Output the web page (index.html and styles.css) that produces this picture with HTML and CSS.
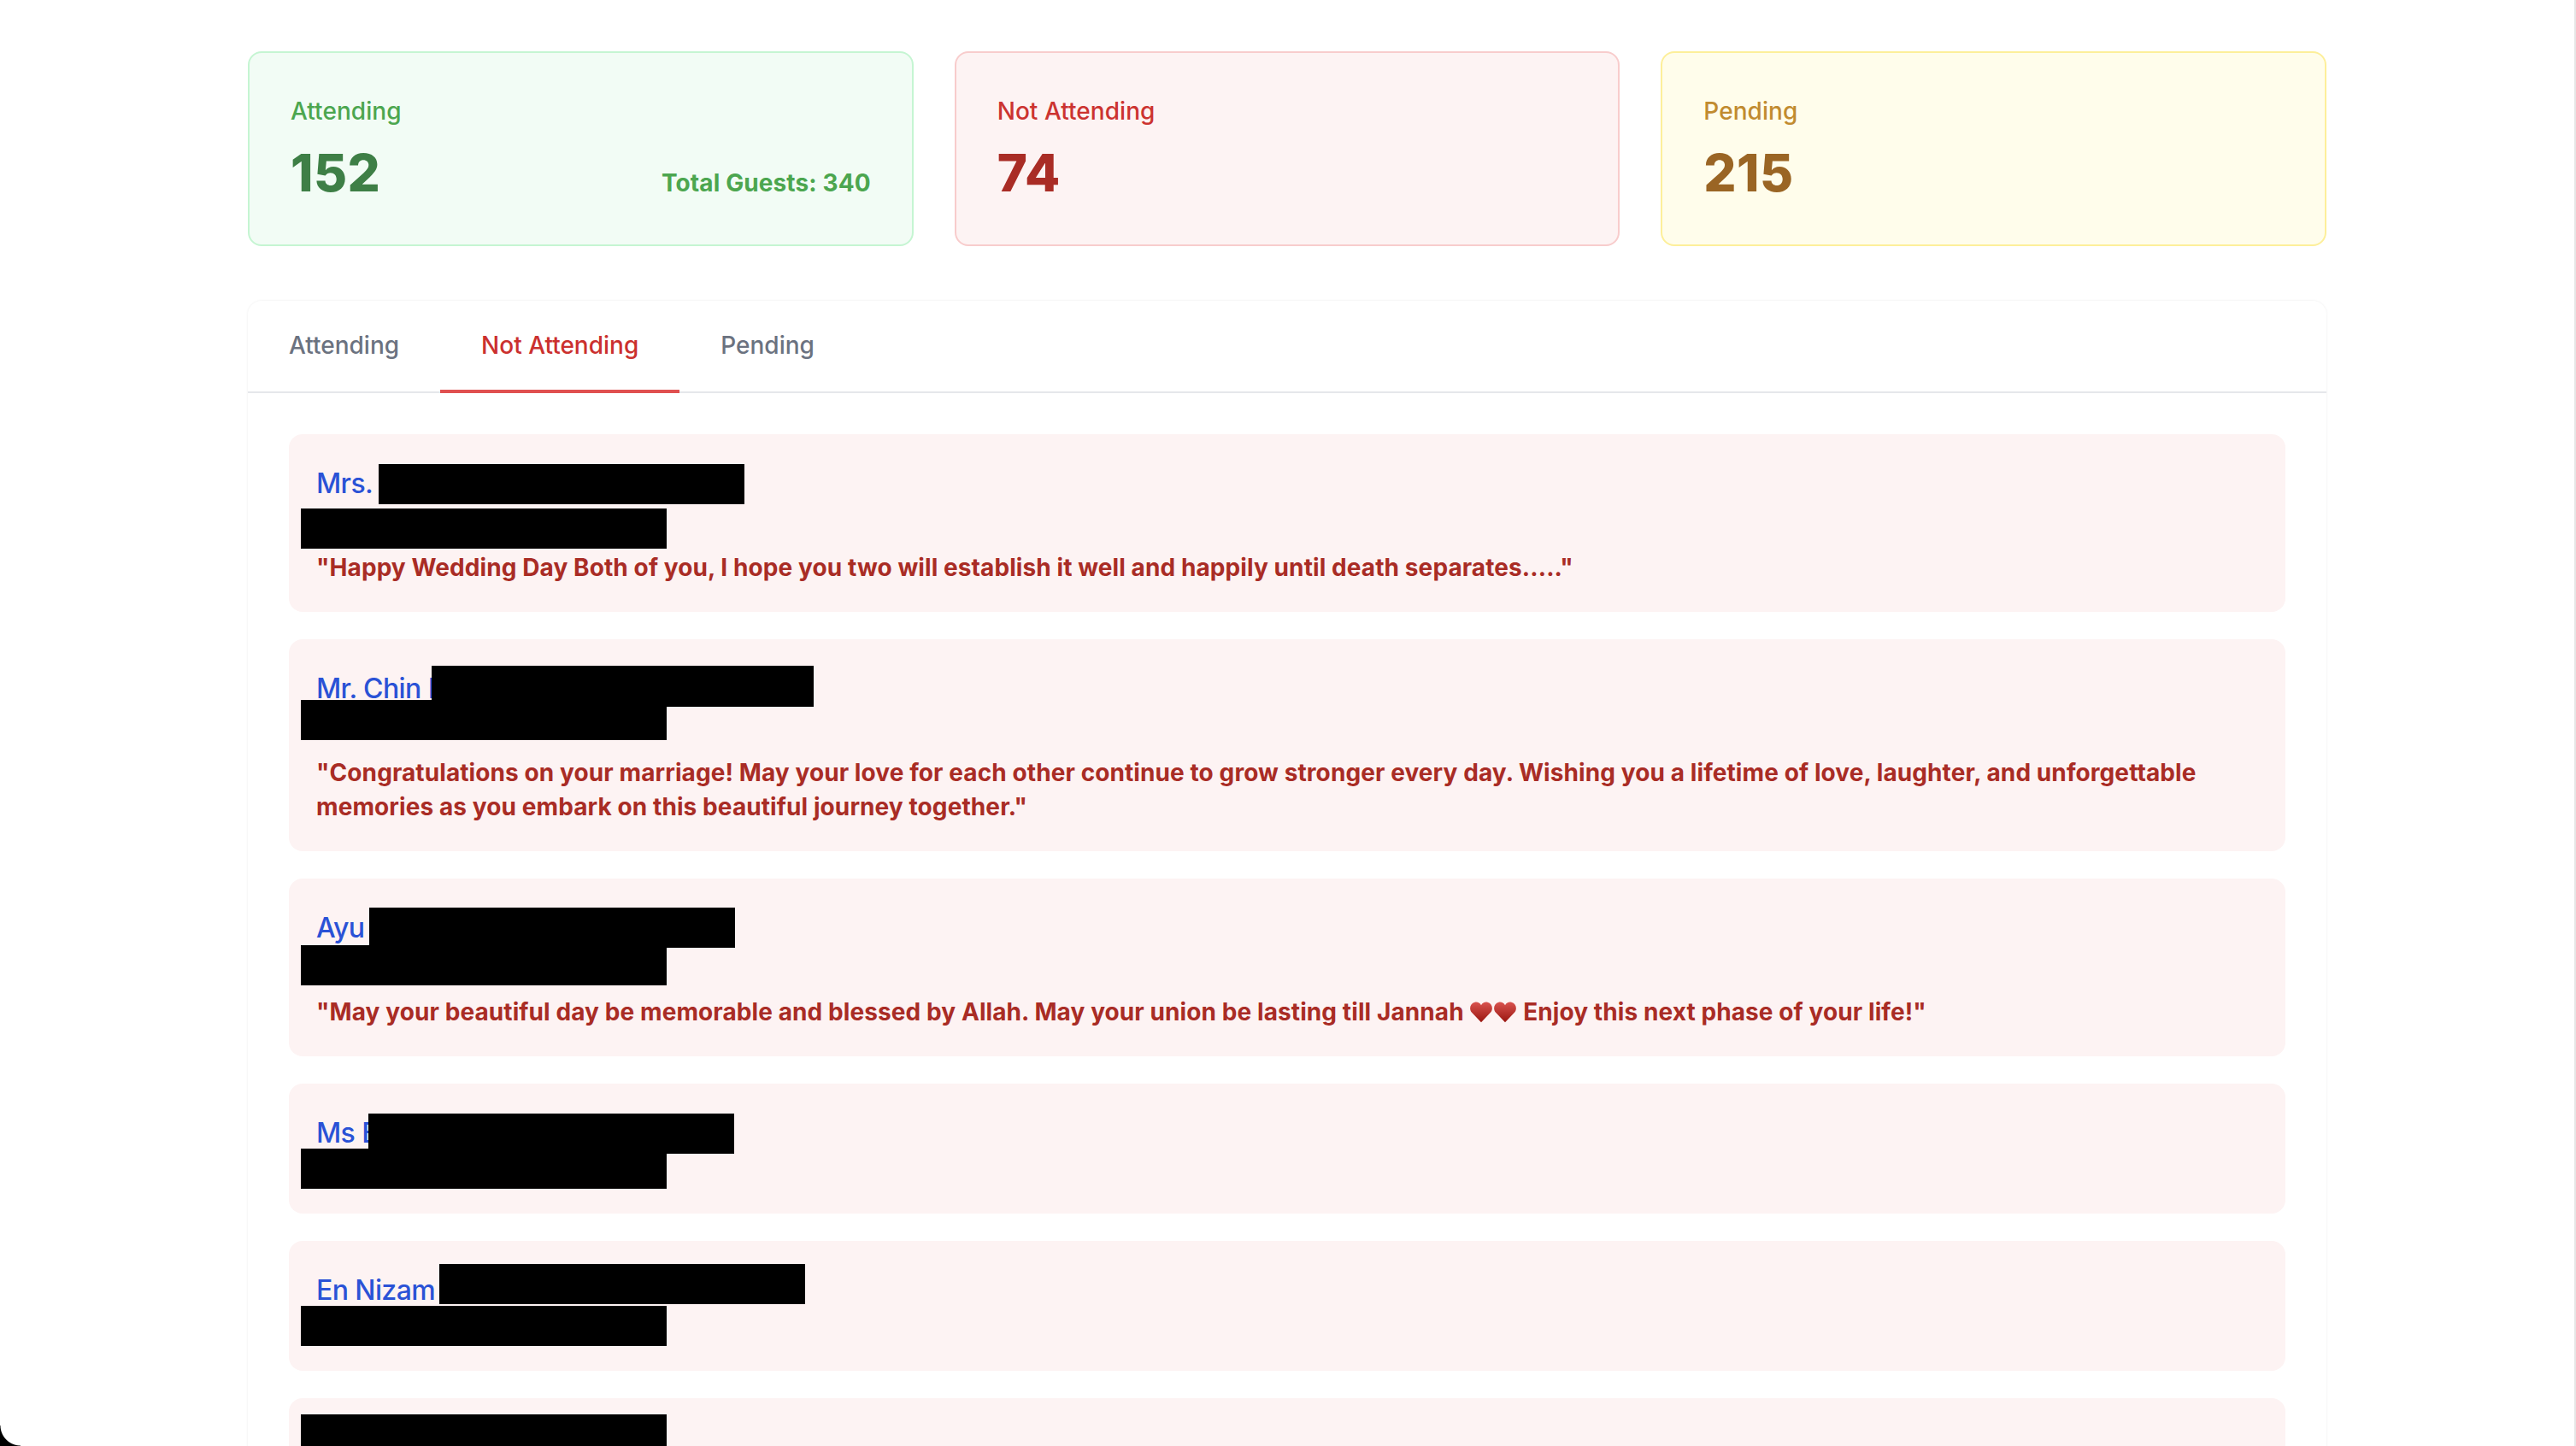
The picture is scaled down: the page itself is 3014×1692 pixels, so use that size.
FILE: index.html
```html
<!DOCTYPE html>
<html lang="en">
<head>
    <meta charset="UTF-8">
    <meta name="viewport" content="width=device-width, initial-scale=1.0">
    <title>RSVP Summary</title>
    <link rel="stylesheet" href="styles.css">
</head>
<body>
    <main class="container">
        <section class="stats">
            <div class="stat stat-green">
                <p class="stat-label">Attending</p>
                <div class="stat-row">
                    <p class="stat-value">152</p>
                    <p class="stat-note">Total Guests: 340</p>
                </div>
            </div>
            <div class="stat stat-red">
                <p class="stat-label">Not Attending</p>
                <div class="stat-row">
                    <p class="stat-value">74</p>
                </div>
            </div>
            <div class="stat stat-yellow">
                <p class="stat-label">Pending</p>
                <div class="stat-row">
                    <p class="stat-value">215</p>
                </div>
            </div>
        </section>

        <section class="panel">
            <nav class="tabs">
                <a class="tab">Attending</a>
                <a class="tab tab-active">Not Attending</a>
                <a class="tab">Pending</a>
            </nav>
            <div class="list">
                <article class="guest">
                    <h3 class="guest-name">Mrs.</h3>
                    <p class="guest-info">&nbsp;</p>
                    <p class="guest-msg">"Happy Wedding Day Both of you, I hope you two will establish it well and happily until death separates....."</p>
                    <span class="redact redact-a1"></span>
                    <span class="redact redact-b1"></span>
                </article>
                <article class="guest">
                    <h3 class="guest-name">Mr. Chin K</h3>
                    <p class="guest-info">&nbsp;</p>
                    <p class="guest-msg">"Congratulations on your marriage! May your love for each other continue to grow stronger every day. Wishing you a lifetime of love, laughter, and unforgettable memories as you embark on this beautiful journey together."</p>
                    <span class="redact redact-a2"></span>
                    <span class="redact redact-b2"></span>
                </article>
                <article class="guest">
                    <h3 class="guest-name">Ayu</h3>
                    <p class="guest-info">&nbsp;</p>
                    <p class="guest-msg">"May your beautiful day be memorable and blessed by Allah. May your union be lasting till Jannah <svg class="heart" viewBox="0 0 24 24"><defs><linearGradient id="hg" x1="0" y1="0" x2="0" y2="1"><stop offset="0" stop-color="#d9534f"/><stop offset="1" stop-color="#99150f"/></linearGradient></defs><path fill="url(#hg)" d="M12 22.5 2.6 12.6C-.3 9.4.6 3.6 5.6 2.3 8.2 1.7 10.700 2.800 12 5.300 13.300 2.800 15.800 1.700 18.400 2.300 23.400 3.600 24.300 9.400 21.400 12.600Z"/></svg><svg class="heart" viewBox="0 0 24 24"><path fill="url(#hg)" d="M12 22.5 2.6 12.6C-.3 9.4.6 3.6 5.6 2.3 8.2 1.7 10.700 2.800 12 5.300 13.300 2.800 15.800 1.700 18.400 2.300 23.400 3.600 24.300 9.400 21.400 12.600Z"/></svg> Enjoy this next phase of your life!"</p>
                    <span class="redact redact-a3"></span>
                    <span class="redact redact-b3"></span>
                </article>
                <article class="guest">
                    <h3 class="guest-name">Ms E</h3>
                    <p class="guest-info">&nbsp;</p>
                    <span class="redact redact-a4"></span>
                    <span class="redact redact-b4"></span>
                </article>
                <article class="guest">
                    <h3 class="guest-name">En Nizam</h3>
                    <p class="guest-info">&nbsp;</p>
                    <span class="redact redact-a5"></span>
                    <span class="redact redact-b5"></span>
                </article>
                <article class="guest">
                    <h3 class="guest-name">&nbsp;</h3>
                    <p class="guest-info">&nbsp;</p>
                    <span class="redact redact-b6"></span>
                </article>
            </div>
        </section>
    </main>
    <div class="window-corner"></div>
</body>
</html>
```

FILE: styles.css
```css
html, body {
    height: 100%;
}
body {
    margin: 0;
    overflow: hidden;
    background: #fff;
    font-family: 'Inter', sans-serif;
    border-right: 2px solid #e6e6e6;
    box-sizing: border-box;
}
p, h3 {
    margin: 0;
}
.container {
    width: 2432px;
    margin-left: 290px;
    padding-top: 60px;
}

/* top stats */
.stats {
    display: grid;
    grid-template-columns: repeat(3, 1fr);
    gap: 48px;
}
.stat {
    height: 228px;
    box-sizing: border-box;
    padding: 48px;
    border: 2px solid;
    border-radius: 16px;
}
.stat-label {
    font-size: 28px;
    line-height: 40px;
    font-weight: 500;
    letter-spacing: 0.05px;
}
.stat-row {
    display: flex;
    justify-content: space-between;
    align-items: flex-end;
    margin-top: 16px;
}
.stat-value {
    font-size: 60px;
    line-height: 72px;
    font-weight: 800;
    letter-spacing: 0.5px;
}
.stat-note {
    font-size: 28px;
    line-height: 40px;
    font-weight: 700;
    letter-spacing: 0.1px;
    margin-bottom: 4px;
}
.stat-green {
    background: #f2fcf5;
    border-color: #c5f5d2;
}
.stat-green .stat-label, .stat-green .stat-note {
    color: #4ca64f;
}
.stat-green .stat-value {
    color: #3e7f46;
}
.stat-red {
    background: #fdf3f3;
    border-color: #f8cccc;
}
.stat-red .stat-label {
    color: #cc3330;
}
.stat-red .stat-value {
    color: #a92c25;
}
.stat-yellow {
    background: #fffdeb;
    border-color: #fdef9a;
}
.stat-yellow .stat-label {
    color: #c18b2f;
}
.stat-yellow .stat-value {
    color: #9a6524;
}

/* tabs + list */
.panel {
    margin-top: 64px;
    border-radius: 16px 16px 0 0;
    box-shadow: 0 0 3px rgba(0, 0, 0, 0.08);
}
.tabs {
    display: flex;
    height: 108px;
    box-sizing: border-box;
    border-bottom: 2px solid #e5e7eb;
}
.tab {
    height: 108px;
    box-sizing: border-box;
    padding: 32px 48px 0;
    font-size: 28px;
    line-height: 40px;
    font-weight: 500;
    color: #6b7280;
}
.tab-active {
    color: #cb302e;
    border-bottom: 4px solid #e05050;
}
.list {
    display: flex;
    flex-direction: column;
    gap: 32px;
    padding: 48px;
}
.guest {
    position: relative;
    padding: 32px;
    background: #fdf3f3;
    border-radius: 16px;
}
.guest-name {
    font-size: 32px;
    line-height: 52px;
    font-weight: 500;
    letter-spacing: -0.6px;
    color: #2a52d6;
}
.guest-info {
    font-size: 28px;
    line-height: 36px;
}
.guest-msg {
    margin-top: 16px;
    font-size: 28px;
    line-height: 40px;
    font-weight: 700;
    letter-spacing: 0.09px;
    color: #a92c25;
}
.heart {
    width: 28px;
    height: 28px;
    vertical-align: -4px;
}

/* blacked out names, laid over the row */
.redact {
    position: absolute;
    background: #000;
    height: 47px;
    width: 428px;
}
.redact-a1 { left: 105px; top: 35px; }
.redact-b1 { left: 14px; top: 87px; }
.redact-a2 { left: 167px; top: 31px; width: 447px; height: 48px; }
.redact-b2 { left: 14px; top: 71px; }
.redact-a3 { left: 94px; top: 34px; }
.redact-b3 { left: 14px; top: 78px; }
.redact-a4 { left: 93px; top: 35px; }
.redact-b4 { left: 14px; top: 76px; }
.redact-a5 { left: 176px; top: 27px; }
.redact-b5 { left: 14px; top: 76px; }
.redact-b6 { left: 14px; top: 19px; }

/* rounded edge of the captured window */
.window-corner {
    position: fixed;
    left: 0;
    bottom: 0;
    width: 24px;
    height: 24px;
    background: radial-gradient(circle at 100% 0, transparent 23px, #000 24px);
}
```
